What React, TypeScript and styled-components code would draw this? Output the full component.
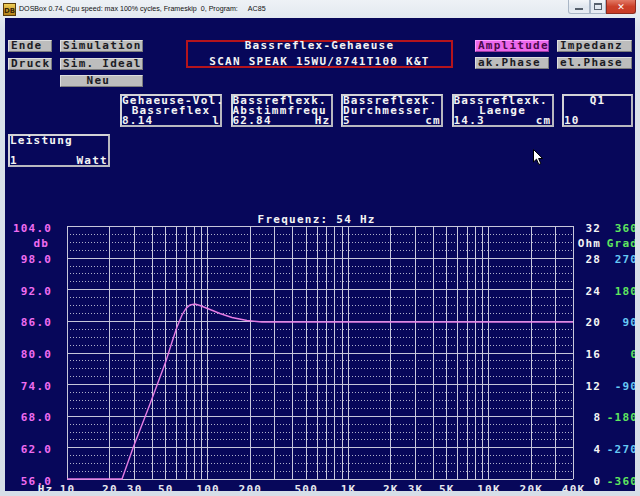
import React from 'react';
import styled, { createGlobalStyle } from 'styled-components';

export const Global = createGlobalStyle`
  * {
    box-sizing: border-box;
  }
  html, body {
    margin: 0;
    padding: 0;
    background: #dde4ec;
  }
`;

const DOS_FONT = `'DejaVu Sans Mono', 'Liberation Mono', monospace`;

const Window = styled.div`
  width: 640px;
  height: 496px;
  display: flex;
  flex-direction: column;
  background: linear-gradient(#eef2f6, #dbe2eb 30px, #d6dee8);
  overflow: hidden;
`;

const TitleBar = styled.div`
  height: 18px;
  display: flex;
  align-items: flex-start;
  padding-left: 3px;
`;

const TitleText = styled.div`
  margin-top: 5px;
  margin-left: 3px;
  font-family: 'Liberation Sans', Arial, sans-serif;
  font-size: 7.1px;
  line-height: 9px;
  color: #111;
  white-space: pre;
`;

const Program = styled.span`
  margin-left: 10px;
`;

const WindowButtons = styled.div`
  margin-left: auto;
  margin-right: 4px;
  display: flex;
`;

const WinButton = styled.div<{ $width: number; $close?: boolean }>`
  width: ${p => p.$width}px;
  height: 14px;
  display: flex;
  align-items: center;
  justify-content: center;
  border: 1px solid ${p => (p.$close ? '#8c2b1f' : '#a9b6c6')};
  border-top: none;
  background: ${p =>
    p.$close
      ? 'linear-gradient(#e27a66, #cc412a 50%, #c83c26)'
      : 'linear-gradient(#f3f6f9, #dfe6ee 55%, #e8edf3)'};
  color: ${p => (p.$close ? '#fff' : '#56606c')};
  font-family: 'DejaVu Sans', sans-serif;
  font-size: 9px;
  font-weight: bold;
  &:first-child {
    border-bottom-left-radius: 3px;
  }
  &:last-child {
    border-bottom-right-radius: 3px;
  }
`;

const MinBar = styled.div`
  width: 8px;
  height: 2px;
  margin-top: 5px;
  background: #56606c;
`;

const MaxBox = styled.div`
  width: 8px;
  height: 7px;
  border: 1px solid #56606c;
  border-top-width: 2px;
`;

const Frame = styled.div`
  flex: 1;
  display: flex;
  padding: 0 5px 5px;
`;

const Screen = styled.div`
  position: relative;
  flex: 1;
  display: flex;
  flex-direction: column;
  background: #07075a;
  overflow: hidden;
  font-family: ${DOS_FONT};
  font-weight: bold;
  font-size: 11px;
  letter-spacing: 1.25px;
  color: #f4f4f4;
  white-space: pre;
`;

const TopRow = styled.div`
  display: flex;
  align-items: flex-start;
  padding: 22px 0 0 3px;
`;

const ButtonGrid = styled.div<{ $cols: string; $rowGap: number; $offset: number }>`
  display: grid;
  grid-template-columns: ${p => p.$cols};
  grid-auto-rows: 12px;
  gap: ${p => p.$rowGap}px 8px;
  margin-left: ${p => p.$offset}px;
`;

const DosButton = styled.div<{ $active?: boolean; $col?: number }>`
  grid-column: ${p => p.$col ?? 'auto'};
  height: 12px;
  padding-left: 2px;
  line-height: 10px;
  background: ${p => (p.$active ? '#ec68ec' : '#bdbdbd')};
  color: ${p => (p.$active ? '#4a0a4a' : '#1c1c24')};
  border-top: 1px solid ${p => (p.$active ? '#ff9cff' : '#dedede')};
  border-left: 1px solid ${p => (p.$active ? '#ff9cff' : '#dedede')};
  border-bottom: 1px solid ${p => (p.$active ? '#a03aa0' : '#7c7c7c')};
  border-right: 1px solid ${p => (p.$active ? '#a03aa0' : '#7c7c7c')};
`;

const TitleBox = styled.div`
  margin-left: 43px;
  width: 267px;
  height: 28px;
  border: 2px solid #b4141c;
  display: flex;
  flex-direction: column;
  justify-content: center;
  align-items: center;
  line-height: 16px;
`;

const FieldRow = styled.div<{ $top: number; $left: number }>`
  display: flex;
  gap: 8.5px;
  margin: ${p => p.$top}px 0 0 ${p => p.$left}px;
`;

const Field = styled.div<{ $width: number }>`
  width: ${p => p.$width}px;
  height: 33px;
  border: 2px solid #d2d2d6;
  border-right-color: #b8b8c0;
  border-bottom-color: #b8b8c0;
  line-height: 10px;
`;

const FieldLine = styled.div<{ $align?: 'left' | 'center' }>`
  height: 10px;
  display: flex;
  justify-content: ${p => (p.$align === 'center' ? 'center' : 'space-between')};
`;

const Chart = styled.svg`
  display: block;
  margin-top: 33px;
  font-family: ${DOS_FONT};
  font-weight: bold;
  font-size: 11px;
  letter-spacing: 1.25px;
`;

const Label = styled.text<{ $color: string }>`
  fill: ${p => p.$color};
`;

const Cursor = styled.svg`
  position: absolute;
  left: 528px;
  top: 131px;
`;

type FieldData = {
  width: number;
  title: string;
  sub: string;
  subAlign: 'left' | 'center';
  value: string;
  unit: string;
};

const fields: FieldData[] = [
  { width: 102, title: 'Gehaeuse-Vol.', sub: 'Bassreflex', subAlign: 'center', value: '8.14', unit: 'l' },
  { width: 102, title: 'Bassreflexk.', sub: 'Abstimmfrequ', subAlign: 'left', value: '62.84', unit: 'Hz' },
  { width: 102, title: 'Bassreflexk.', sub: 'Durchmesser', subAlign: 'left', value: '5', unit: 'cm' },
  { width: 102, title: 'Bassreflexk.', sub: 'Laenge', subAlign: 'center', value: '14.3', unit: 'cm' },
  { width: 71, title: 'Q1', sub: '', subAlign: 'center', value: '10', unit: '' },
];

// plot geometry, in window coordinates
const PX0 = 67;
const PX1 = 573;
const PY0 = 226;
const PY1 = 479;
const DECADE = (PX1 - PX0) / Math.log10(4000);
const STEP = (PY1 - PY0) / 8;

const freqX = (f: number) => PX0 + DECADE * Math.log10(f / 10);
const crisp = (v: number) => Math.round(v) + 0.5;

const gridFreqs: number[] = [];
[10, 100, 1000, 10000].forEach(d => {
  for (let m = 1; m <= 9; m++) if (m * d <= 40000) gridFreqs.push(m * d);
});

const freqLabels: [string, number][] = [
  ['10', 10], ['20', 20], ['30', 30], ['50', 50], ['100', 100], ['200', 200],
  ['500', 500], ['1K', 1000], ['2K', 2000], ['3K', 3000], ['5K', 5000],
  ['10K', 10000], ['20K', 20000], ['40K', 40000],
];

const dbLabels = ['104.0', '98.0', '92.0', '86.0', '80.0', '74.0', '68.0', '62.0', '56.0'];
const ohmLabels = ['32', '28', '24', '20', '16', '12', '8', '4', '0'];
const gradLabels = ['360', '270', '180', '90', '0', '-90', '-180', '-270', '-360'];

const curve: [number, number][] = [
  [67, 479], [122, 479], [133, 448], [150, 404], [166, 361], [172, 342],
  [177, 327], [182, 315], [186, 308.5], [190, 305], [195, 304], [200, 305.5],
  [210, 309.5], [220, 313.5], [232, 317.5], [247, 320.5], [262, 322], [573, 322],
];

const PINK = '#f06cf0';
const GREEN = '#5fe65f';
const CYAN = '#66c8f4';
const LS = 1.25;

const FrequencyChart = () => (
  <Chart width={630} height={291} viewBox="5 200 630 291">
    <Label $color="#f4f4f4" x={316 + LS / 2} y={223} textAnchor="middle">
      Frequenz: 54 Hz
    </Label>

    {Array.from({ length: 32 }, (_, i) => i)
      .filter(i => i % 4 !== 0)
      .map(i => (
        <line
          key={`m${i}`}
          x1={PX0}
          x2={PX1}
          y1={crisp(PY0 + (i * STEP) / 4)}
          y2={crisp(PY0 + (i * STEP) / 4)}
          stroke="#aeb0cc"
          strokeDasharray="1 2"
        />
      ))}
    {Array.from({ length: 9 }, (_, k) => (
      <line
        key={`h${k}`}
        x1={PX0}
        x2={PX1}
        y1={crisp(PY0 + k * STEP)}
        y2={crisp(PY0 + k * STEP)}
        stroke="#c6c6da"
      />
    ))}
    {gridFreqs.map(f => (
      <line
        key={`v${f}`}
        x1={crisp(freqX(f))}
        x2={crisp(freqX(f))}
        y1={PY0}
        y2={PY1}
        stroke="#c8c8dc"
      />
    ))}

    <polyline
      points={curve.map(([x, y]) => `${x},${y}`).join(' ')}
      fill="none"
      stroke="#e47ce4"
      strokeWidth={1.4}
    />

    {dbLabels.map((t, k) => (
      <Label key={t} $color={PINK} x={51 + LS} y={PY0 + k * STEP + 5.5} textAnchor="end">
        {t}
      </Label>
    ))}
    <Label $color={PINK} x={48 + LS} y={247} textAnchor="end">db</Label>

    {ohmLabels.map((t, k) => (
      <Label key={t} $color="#f4f4f4" x={600 + LS} y={PY0 + k * STEP + 5.5} textAnchor="end">
        {t}
      </Label>
    ))}
    <Label $color="#f4f4f4" x={600 + LS} y={247} textAnchor="end">Ohm</Label>

    {gradLabels.map((t, k) => (
      <Label
        key={t}
        $color={k % 2 === 0 ? GREEN : CYAN}
        x={637 + LS}
        y={PY0 + k * STEP + 5.5}
        textAnchor="end"
      >
        {t}
      </Label>
    ))}
    <Label $color={GREEN} x={637 + LS} y={247} textAnchor="end">Grad</Label>

    <Label $color="#e8e8ee" x={45 + LS / 2} y={493} textAnchor="middle">Hz</Label>
    {freqLabels.map(([t, f]) => (
      <Label key={t} $color="#e8e8ee" x={freqX(f) + LS / 2} y={493} textAnchor="middle">
        {t}
      </Label>
    ))}
  </Chart>
);

const AppIcon = () => (
  <svg width={13} height={13} viewBox="0 0 13 13" style={{ marginTop: 3 }}>
    <defs>
      <linearGradient id="dbicon" x1="0" y1="0" x2="0" y2="1">
        <stop offset="0" stopColor="#f2d25a" />
        <stop offset="1" stopColor="#b07c14" />
      </linearGradient>
    </defs>
    <rect x={0.5} y={0.5} width={12} height={12} fill="url(#dbicon)" stroke="#5a3c08" />
    <text x={6.5} y={9.5} textAnchor="middle" fontSize={7} fontWeight="bold" fontFamily="DejaVu Sans" fill="#3a2606">
      DB
    </text>
  </svg>
);

export default function App() {
  return (
    <Window>
      <Global />
      <TitleBar>
        <AppIcon />
        <TitleText>
          DOSBox 0.74, Cpu speed: max 100% cycles, Frameskip  0, Program:<Program>AC85</Program>
        </TitleText>
        <WindowButtons>
          <WinButton $width={22}>
            <MinBar />
          </WinButton>
          <WinButton $width={16}>
            <MaxBox />
          </WinButton>
          <WinButton $width={30} $close>✕</WinButton>
        </WindowButtons>
      </TitleBar>

      <Frame>
        <Screen>
          <TopRow>
            <ButtonGrid $cols="44px 83px" $rowGap={5.5} $offset={0}>
              <DosButton>Ende</DosButton>
              <DosButton>Simulation</DosButton>
              <DosButton>Druck</DosButton>
              <DosButton>Sim. Ideal</DosButton>
              <DosButton $col={2}>   Neu</DosButton>
            </ButtonGrid>
            <TitleBox>
              <div>Bassreflex-Gehaeuse</div>
              <div>SCAN SPEAK 15WU/8741T100 K&amp;T</div>
            </TitleBox>
            <ButtonGrid $cols="74px 75px" $rowGap={5} $offset={22}>
              <DosButton $active>Amplitude</DosButton>
              <DosButton>Impedanz</DosButton>
              <DosButton>ak.Phase</DosButton>
              <DosButton>el.Phase</DosButton>
            </ButtonGrid>
          </TopRow>

          <FieldRow $top={7} $left={115}>
            {fields.map((f, i) => (
              <Field key={i} $width={f.width}>
                <FieldLine $align={f.title === 'Q1' ? 'center' : 'left'}>
                  <span>{f.title}</span>
                </FieldLine>
                <FieldLine $align={f.subAlign}>
                  <span>{f.sub}</span>
                </FieldLine>
                <FieldLine>
                  <span>{f.value}</span>
                  <span>{f.unit}</span>
                </FieldLine>
              </Field>
            ))}
          </FieldRow>

          <FieldRow $top={7} $left={3}>
            <Field $width={102}>
              <FieldLine>
                <span>Leistung</span>
              </FieldLine>
              <FieldLine />
              <FieldLine>
                <span>1</span>
                <span>Watt</span>
              </FieldLine>
            </Field>
          </FieldRow>

          <FrequencyChart />

          <Cursor width={12} height={17} viewBox="0 0 12 17">
            <path d="M0.5 0.5 L0.5 13 L3.5 10.2 L5.8 15.5 L7.8 14.6 L5.6 9.5 L9.6 9.5 Z" fill="#fff" stroke="#000" strokeWidth={1} />
          </Cursor>
        </Screen>
      </Frame>
    </Window>
  );
}
